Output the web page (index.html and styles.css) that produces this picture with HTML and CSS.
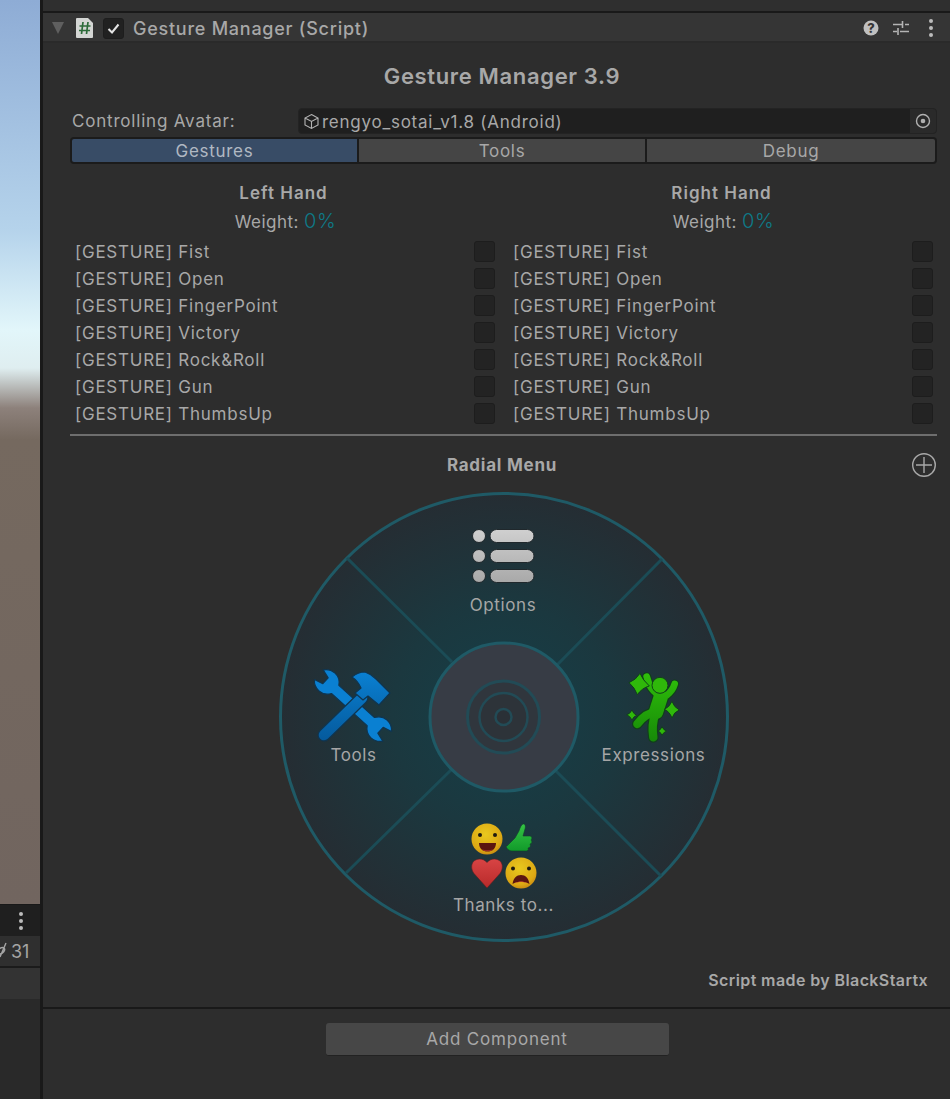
FILE: index.html
```html
<!DOCTYPE html>
<html lang="en">
<head>
<meta charset="utf-8">
<title>Gesture Manager</title>
<link rel="stylesheet" href="styles.css">
</head>
<body>
<div class="left-col">
  <div class="scene"></div>
  <div class="mini-toolbar"><span class="kebab small"><i></i><i></i><i></i></span></div>
  <div class="count-row">
    <svg class="hidden-icon" width="10" height="20" viewBox="0 0 10 20"><path d="M-4 12c3-5 6-6 8-5 2 2-1 6-5 6M6 2 0 16" fill="none" stroke="#a5a5a5" stroke-width="1.4"/></svg>
    <span>31</span>
  </div>
  <div class="list-row"></div>
</div>
<main class="inspector">
  <div class="top-strip"></div>
  <header class="comp-header">
    <span class="fold"></span>
    <svg class="script-icon" width="18" height="20" viewBox="0 0 18 20"><path d="M1 0h11l5 5v14a1 1 0 0 1-1 1H1a1 1 0 0 1-1-1V1a1 1 0 0 1 1-1z" fill="#d4d6d4"/><path d="M7 4 5.500 16M12 4l-1.500 12M3.500 8h11M3 12.500h11" stroke="#2d6b3a" stroke-width="1.700" fill="none"/></svg>
    <span class="check on"><svg width="13" height="11" viewBox="0 0 13 11"><path d="M1.500 6 5 9.500 11.500 1.500" fill="none" stroke="#e4e4e4" stroke-width="2"/></svg></span>
    <h2 class="comp-title">Gesture Manager (Script)</h2>
    <div class="header-tools">
      <svg width="16" height="16" viewBox="0 0 16 16"><circle cx="8" cy="8" r="7.500" fill="#c0c0c0"/><text x="8" y="12.500" class="help-mark">?</text></svg>
      <svg width="16" height="16" viewBox="0 0 16 16"><path d="M0 4.500h9M12 4.500h4M9.500 1v7M0 11.500h4M7 11.500h9M5 8v7" stroke="#b4b4b4" stroke-width="1.600" fill="none"/></svg>
      <span class="kebab"><i></i><i></i><i></i></span>
    </div>
  </header>
  <section class="body">
    <h1 class="main-title">Gesture Manager 3.9</h1>
    <div class="avatar-row">
      <label class="avatar-label">Controlling Avatar:</label>
      <div class="object-field">
        <svg class="cube" width="17" height="17" viewBox="0 0 17 17"><path d="M8.500 1.500 15 5v7l-6.500 3.500L2 12V5zM2 5l6.500 3.500L15 5M8.500 8.500v7" fill="none" stroke="#b4b4b4" stroke-width="1.100"/></svg>
        <span class="object-name">rengyo_sotai_v1.8 (Android)</span>
        <span class="object-pick"><svg width="16" height="16" viewBox="0 0 16 16"><circle cx="8" cy="8" r="6.500" fill="none" stroke="#b0b0b0" stroke-width="1.400"/><circle cx="8" cy="8" r="2.300" fill="#b0b0b0"/></svg></span>
      </div>
    </div>
    <div class="tabs">
      <button class="tab active">Gestures</button>
      <button class="tab">Tools</button>
      <button class="tab">Debug</button>
    </div>
    <div class="hands">
      <div class="hand">
        <h3 class="hand-title">Left Hand</h3>
        <p class="weight">Weight: <b>0%</b></p>
        <ul class="gesture-list">
          <li>[GESTURE] Fist<span class="check"></span></li>
          <li>[GESTURE] Open<span class="check"></span></li>
          <li>[GESTURE] FingerPoint<span class="check"></span></li>
          <li>[GESTURE] Victory<span class="check"></span></li>
          <li>[GESTURE] Rock&amp;Roll<span class="check"></span></li>
          <li>[GESTURE] Gun<span class="check"></span></li>
          <li>[GESTURE] ThumbsUp<span class="check"></span></li>
        </ul>
      </div>
      <div class="hand">
        <h3 class="hand-title">Right Hand</h3>
        <p class="weight">Weight: <b>0%</b></p>
        <ul class="gesture-list">
          <li>[GESTURE] Fist<span class="check"></span></li>
          <li>[GESTURE] Open<span class="check"></span></li>
          <li>[GESTURE] FingerPoint<span class="check"></span></li>
          <li>[GESTURE] Victory<span class="check"></span></li>
          <li>[GESTURE] Rock&amp;Roll<span class="check"></span></li>
          <li>[GESTURE] Gun<span class="check"></span></li>
          <li>[GESTURE] ThumbsUp<span class="check"></span></li>
        </ul>
      </div>
    </div>
    <hr class="sep">
    <div class="radial-head">
      <span></span>
      <h3 class="radial-title">Radial Menu</h3>
      <svg class="plus" width="26" height="26" viewBox="0 0 26 26"><circle cx="13" cy="13" r="11.300" fill="none" stroke="#a8a8a8" stroke-width="1.400"/><path d="M13 5v16M5 13h16" stroke="#a8a8a8" stroke-width="1.400"/></svg>
    </div>
    <svg class="radial" width="450" height="450" viewBox="279 492 450 450">
      <defs>
        <radialGradient id="disc" gradientUnits="userSpaceOnUse" cx="504" cy="717" r="224">
          <stop offset="0" stop-color="#153f48"/><stop offset=".5" stop-color="#1b383f"/><stop offset="1" stop-color="#252d33"/>
        </radialGradient>
        <linearGradient id="pill" gradientUnits="userSpaceOnUse" x1="0" y1="529" x2="0" y2="583">
          <stop offset="0" stop-color="#d0d0d0"/><stop offset="1" stop-color="#a8a8a8"/>
        </linearGradient>
        <linearGradient id="blue" gradientUnits="userSpaceOnUse" x1="0" y1="672" x2="0" y2="742">
          <stop offset="0" stop-color="#0a80d2"/><stop offset="1" stop-color="#05599b"/>
        </linearGradient>
        <linearGradient id="danceGreen" gradientUnits="userSpaceOnUse" x1="0" y1="40" x2="0" y2="240">
          <stop offset="0" stop-color="#2fc00a"/><stop offset="1" stop-color="#178a08"/>
        </linearGradient>
        <radialGradient id="face" cx=".45" cy=".35" r=".75">
          <stop offset="0" stop-color="#e8c81e"/><stop offset=".7" stop-color="#dca814"/><stop offset="1" stop-color="#bc7810"/>
        </radialGradient>
        <linearGradient id="thumb" x1="0" y1="0" x2="0" y2="1">
          <stop offset="0" stop-color="#35c445"/><stop offset="1" stop-color="#119a2a"/>
        </linearGradient>
        <linearGradient id="heart" x1="0" y1="0" x2="0" y2="1">
          <stop offset="0" stop-color="#d84444"/><stop offset="1" stop-color="#b82a2a"/>
        </linearGradient>
      </defs>
      <circle cx="504" cy="717" r="223.500" fill="url(#disc)" stroke="#1f5a66" stroke-width="3"/>
      <path d="M347 558 452 662M662 559 557 665M346 873 451 770M661 876 556 771" stroke="#1b4c56" stroke-width="3" fill="none"/>
      <circle cx="504" cy="717" r="74" fill="#373c45" stroke="#1f5a66" stroke-width="3"/>
      <circle cx="503.500" cy="717" r="36" fill="#30363d" stroke="#224b56" stroke-width="3"/>
      <circle cx="503.500" cy="717" r="24" fill="#2d3339" stroke="#224b56" stroke-width="2.500"/>
      <circle cx="503.500" cy="717" r="8" fill="#2a3036" stroke="#224b56" stroke-width="2.500"/>

      <g class="options-icon" fill="url(#pill)" stroke="#20282c" stroke-width="1">
        <circle cx="479" cy="536" r="6.500"/><circle cx="479" cy="556" r="6.500"/><circle cx="479" cy="576" r="6.500"/>
        <rect x="490" y="529.500" width="44" height="13" rx="6.500"/>
        <rect x="490" y="549.500" width="44" height="13" rx="6.500"/>
        <rect x="490" y="569.500" width="44" height="13" rx="6.500"/>
      </g>
      <text x="503" y="611" class="slice-label">Options</text>

      <g class="tools-icon">
        <path transform="translate(353 705.500) rotate(42)" d="M-24-5.500Q-28-12-35-12Q-42-12-46-6.500L-37-4L-37 4L-46 6.500Q-42 12-35 12Q-28 12-24 5.500L24 5.500Q28 12 35 12Q42 12 46 6.500L37 4L37-4L46-6.500Q42-12 35-12Q28-12 24-5.500Z" fill="url(#blue)" stroke="#0f3550" stroke-width="1.200" stroke-linejoin="round"/>
        <path d="M362 698 324 735" stroke="#0f3550" stroke-width="13" stroke-linecap="round" fill="none"/>
        <path d="M362 698 324 735" stroke="url(#blue)" stroke-width="10.500" stroke-linecap="round" fill="none"/>
        <path d="M352 677Q358 672 365 672Q371 674 376 679L390 693L379 705L368 696L363 700L355 693L361 688Q358 681 352 677Z" fill="url(#blue)" stroke="#0f3550" stroke-width="1.200" stroke-linejoin="round"/>
      </g>
      <text x="353.500" y="761" class="slice-label">Tools</text>

      <g class="dance-icon" transform="translate(610 660) scale(.3333)">
        <g fill="none" stroke-linecap="round" stroke-linejoin="round" stroke="#10401a">
          <path d="M110 50 118 74Q128 94 148 106L170 106Q188 92 194 72" stroke-width="27"/>
          <path d="M152 112 138 156" stroke-width="50"/>
          <path d="M136 158Q108 158 82 192" stroke-width="32"/>
          <path d="M136 160Q124 195 130 232" stroke-width="32"/>
        </g>
        <g fill="none" stroke-linecap="round" stroke-linejoin="round" stroke="url(#danceGreen)">
          <path d="M110 50 118 74Q128 94 148 106L170 106Q188 92 194 72" stroke-width="20"/>
          <path d="M152 112 138 156" stroke-width="43"/>
          <path d="M136 158Q108 158 82 192" stroke-width="25"/>
          <path d="M136 160Q124 195 130 232" stroke-width="25"/>
        </g>
        <g fill="#2fb80a" stroke="#10401a" stroke-width="3">
          <circle cx="150" cy="76" r="24"/>
          <path d="M57 68Q78 60 90 40Q98 60 118 78Q96 84 82 104Q74 82 57 68z"/>
          <path d="M163 148Q178 142 186 124Q192 142 208 150Q192 156 186 174Q178 154 163 148z"/>
          <path d="M50 164Q60 162 66 150Q70 162 80 166Q70 170 66 180Q60 168 50 164z"/>
          <path d="M144 213Q152 210 156 200Q160 210 170 213Q160 217 156 226Q152 216 144 213z"/>
        </g>
      </g>
      <text x="653.500" y="761" class="slice-label">Expressions</text>

      <g class="smile">
        <circle cx="487" cy="839" r="15.500" fill="url(#face)"/>
        <circle cx="480" cy="835" r="2" fill="#1f1a10"/><circle cx="495" cy="835" r="2" fill="#1f1a10"/>
        <path d="M479 843h17c0 6-4 8.500-8.500 8.500S479 849 479 843z" fill="#5a1510"/>
        <path d="M482 849c3 2 8 2 11 0-2 3-9 3-11 0z" fill="#d0403a"/>
      </g>
      <path class="thumbs" d="M507 846 515 838 519 831c1-3 2-6 4-7 2-.500 3 2 2 5l-2 7 7 0c2 0 2.500 3 1 4 1.500 1 1 4-1 4 1 2 0 4-2 4 1 2-.500 3-2 3h-13c-3 0-6-1-7-5z" fill="url(#thumb)" stroke="#10402a" stroke-width=".6"/>
      <path class="heart" d="M487 888 474 873.500c-3-4-3-9-.500-12 3-3 9-4 13.500 1 4.500-5 10.500-4 13.500-1 2.500 3 2.500 8-.500 12z" fill="url(#heart)" stroke="#5a2020" stroke-width=".6"/>
      <g class="sad">
        <circle cx="521" cy="873" r="15.500" fill="url(#face)"/>
        <circle cx="513" cy="868.500" r="2" fill="#1f1a10"/><circle cx="529" cy="868.500" r="2" fill="#1f1a10"/>
        <path d="M512.500 884c1-6 4-9 8.500-9s7.500 3 8.500 9c-5-3-12-3-17 0z" fill="#5a1510"/>
        <path d="M515 883c3-2 9-2 12 0-3-1.500-9-1.500-12 0z" fill="#d0403a"/>
      </g>
      <text x="503.500" y="911" class="slice-label">Thanks to...</text>
    </svg>
    <p class="credit">Script made by BlackStartx</p>
  </section>
  <footer class="foot">
    <button class="add-btn">Add Component</button>
  </footer>
</main>
</body>
</html>
```
FILE: styles.css
```css
* { box-sizing: border-box; }
html, body { margin: 0; height: 100%; }
body {
  display: flex;
  width: 950px;
  height: 1099px;
  overflow: hidden;
  background: #2d2d2d;
  color: #a8a8a8;
  font-family: Inter, "Liberation Sans", sans-serif;
  font-size: 17px;
  letter-spacing: .6px;
}
h1, h2, h3, p, ul { margin: 0; padding: 0; font-size: inherit; }
ul { list-style: none; }

.left-col {
  width: 43px;
  flex: none;
  border-right: 3px solid #191919;
  display: flex;
  flex-direction: column;
  background: #292929;
}
.scene {
  height: 905px;
  background: linear-gradient(180deg, #8eacd5 0, #b5d3eb 230px, #e2f6fa 330px, #dfeef0 368px, #8d817b 408px, #75695f 440px, #71655f 905px);
  border-bottom: 1px solid #191919;
}
.mini-toolbar {
  height: 31px;
  background: #1f1f1f;
  display: flex;
  align-items: center;
  justify-content: flex-end;
  padding-right: 16px;
}
.count-row {
  height: 32px;
  background: #2f2f2f;
  border-bottom: 2px solid #1b1b1b;
  display: flex;
  align-items: center;
  overflow: hidden;
  font-size: 18px;
  letter-spacing: 0;
  color: #a5a5a5;
}
.hidden-icon { flex: none; }
.count-row span { margin-left: 1px; }
.list-row { height: 31px; background: #333; }

.inspector { flex: 1; display: flex; flex-direction: column; min-width: 0; }
.top-strip { height: 13px; background: #2f2f2f; border-bottom: 2px solid #191919; }
.comp-header {
  height: 30px;
  background: #353535;
  border-bottom: 2px solid #2a2a2a;
  display: flex;
  align-items: center;
  padding: 2px 11px 0 9px;
}
.fold {
  width: 0; height: 0;
  border-left: 6.500px solid transparent;
  border-right: 6.500px solid transparent;
  border-top: 12px solid #5f5f5f;
}
.script-icon { margin-left: 12px; }
.check {
  display: inline-flex;
  align-items: center;
  justify-content: center;
  width: 21px;
  height: 21px;
  background: #232323;
  border: 1px solid #1d1d1d;
  border-radius: 3px;
  flex: none;
}
.comp-header .check { margin-left: 9px; background: #212121; }
.comp-title { margin-left: 9px; font-size: 18px; font-weight: 500; flex: 1; letter-spacing: .75px; }
.header-tools { display: flex; align-items: center; gap: 14px; }
.help-mark { font-size: 13px; font-weight: 800; fill: #353535; text-anchor: middle; letter-spacing: 0; }
.kebab { display: flex; flex-direction: column; gap: 3px; width: 16px; align-items: center; }
.kebab i { width: 4px; height: 4px; border-radius: 50%; background: #bcbcbc; }
.kebab.small { width: 6px; }

.body { padding: 17px 13px 0 27px; flex: 1; }
.main-title { height: 30px; line-height: 30px; text-align: center; font-size: 22px; font-weight: 600; letter-spacing: .65px; padding-right: 3px; margin-top: 1px; }
.avatar-row { display: flex; margin-top: 17px; height: 26px; }
.avatar-label { width: 228px; padding-left: 2px; line-height: 26px; flex: none; letter-spacing: .8px; }
.object-field {
  flex: 1;
  display: flex;
  align-items: center;
  background: #1f1f1f;
  border: 1px solid #232323;
  border-radius: 4px;
  padding-left: 4px;
  overflow: hidden;
}
.object-name { flex: 1; margin-left: 2px; letter-spacing: .75px; padding-top: 1px; }
.object-pick { width: 26px; height: 100%; background: #2a2a2a; display: flex; align-items: center; justify-content: center; }
.tabs {
  display: grid;
  grid-template-columns: 285px 286px 1fr;
  gap: 2px;
  height: 27px;
  margin-top: 3px;
  background: #1b1b1b;
  border: 2px solid #1b1b1b;
  border-radius: 4px;
  overflow: hidden;
}
.tab {
  border: 0;
  padding: 0;
  background: #454545;
  color: #a8a8a8;
  font: inherit;
  letter-spacing: .7px;
}
.tab.active { background: #384c66; color: #b0b8c2; }

.hands { display: grid; grid-template-columns: 420px 420px; gap: 18px; padding-left: 5px; margin-top: 16px; }
.hand-title { height: 26px; line-height: 26px; text-align: center; font-weight: 600; padding-right: 3px; letter-spacing: 1px; }
.weight { height: 30px; line-height: 30px; text-align: center; letter-spacing: .45px; padding-left: 1px; }
.weight b { font-size: 20px; font-weight: 300; color: #0e7a88; letter-spacing: .6px; }
.gesture-list { margin-top: 2px; }
.gesture-list li { height: 27px; display: flex; align-items: center; justify-content: space-between; letter-spacing: .75px; }

.sep { height: 2px; margin: 7px 0 0; border: 0; background: #6e6e6e; }
.radial-head { display: grid; grid-template-columns: 1fr auto 1fr; align-items: center; height: 26px; margin-top: 16px; padding-right: 3px; }
.radial-title { font-weight: 700; letter-spacing: .75px; }
.plus { justify-self: end; margin-right: -3px; }
.radial { display: block; margin: 14px auto 0; }
.slice-label { font-size: 17px; fill: #a6a6a6; text-anchor: middle; }
.credit { height: 20px; line-height: 20px; margin-top: 28px; text-align: right; padding-right: 9px; font-weight: 600; font-size: 16px; letter-spacing: .4px; }

.foot {
  height: 92px;
  border-top: 2px solid #191919;
  display: flex;
  justify-content: center;
  padding: 14px 0 0 1px;
}
.add-btn {
  width: 343px;
  height: 33px;
  background: #474747;
  color: #a8a8a8;
  border: 0;
  border-bottom: 1px solid #222;
  border-radius: 3px;
  font: inherit;
  letter-spacing: .8px;
}
```
